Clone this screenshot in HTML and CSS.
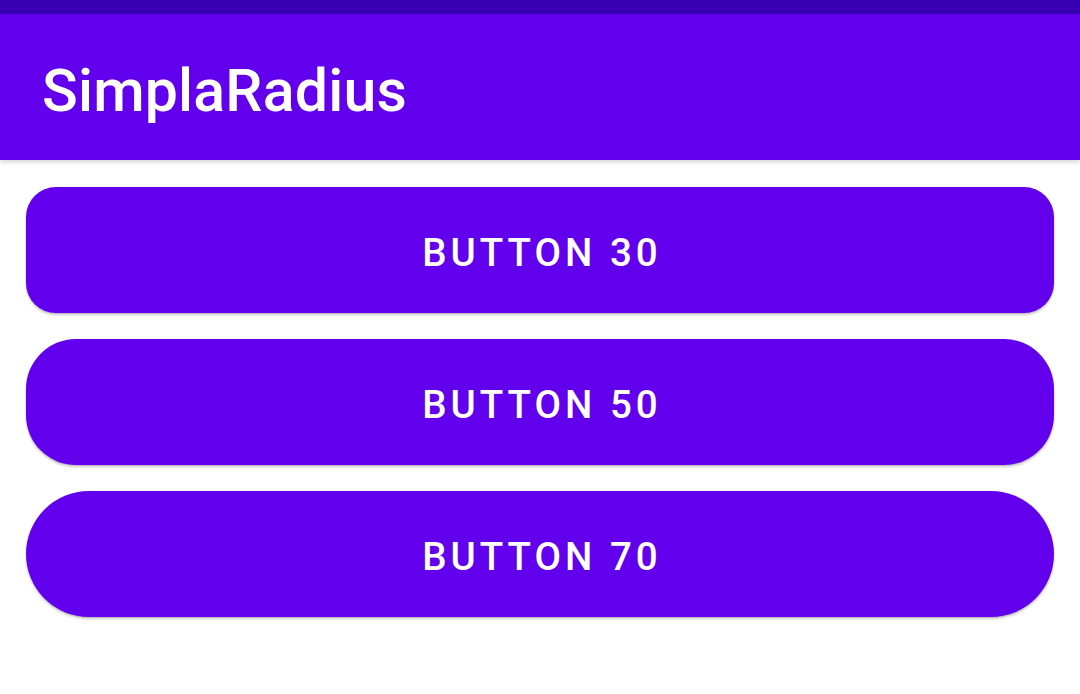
FILE: index.html
```html
<!DOCTYPE html>
<html>
<head>
<meta charset="utf-8">
<link rel="stylesheet" href="styles.css">
</head>
<body>
<div class="status"></div>
<header class="appbar"><h1 class="title">SimplaRadius</h1></header>
<main class="list">
  <button class="btn r30">BUTTON 30</button>
  <button class="btn r50">BUTTON 50</button>
  <button class="btn r70">BUTTON 70</button>
</main>
</body>
</html>
```
FILE: styles.css
```css
html, body { margin: 0; padding: 0; background: #fff; }
body { width: 1080px; height: 694px; overflow: hidden; font-family: Roboto, "Noto Sans", sans-serif; }
.status { height: 14px; background: #3700B3; }
.appbar {
  height: 146px; box-sizing: border-box; background: #6200EE; display: flex; align-items: center;
  padding-left: 42px; padding-top: 6px; box-shadow: 0 2px 5px rgba(0,0,0,0.18); position: relative; z-index: 1;
}
.title { margin: 0; color: #fff; font-weight: 500; font-size: 59px; line-height: 1; letter-spacing: 0.2px; }
.list { display: flex; flex-direction: column; gap: 26px; padding: 27px 26px; }
.btn {
  height: 126px; border: none; background: #6200EE; color: #fff;
  font-family: Roboto, sans-serif; font-weight: 500; font-size: 38.5px; letter-spacing: 4px;
  box-shadow: 0 2px 3px rgba(0,0,0,0.2), 0 1px 1px rgba(0,0,0,0.1);
  padding: 4px 0 0 4px;
}
.r30 { border-radius: 30px; }
.r50 { border-radius: 50px; }
.r70 { border-radius: 70px; }
```
